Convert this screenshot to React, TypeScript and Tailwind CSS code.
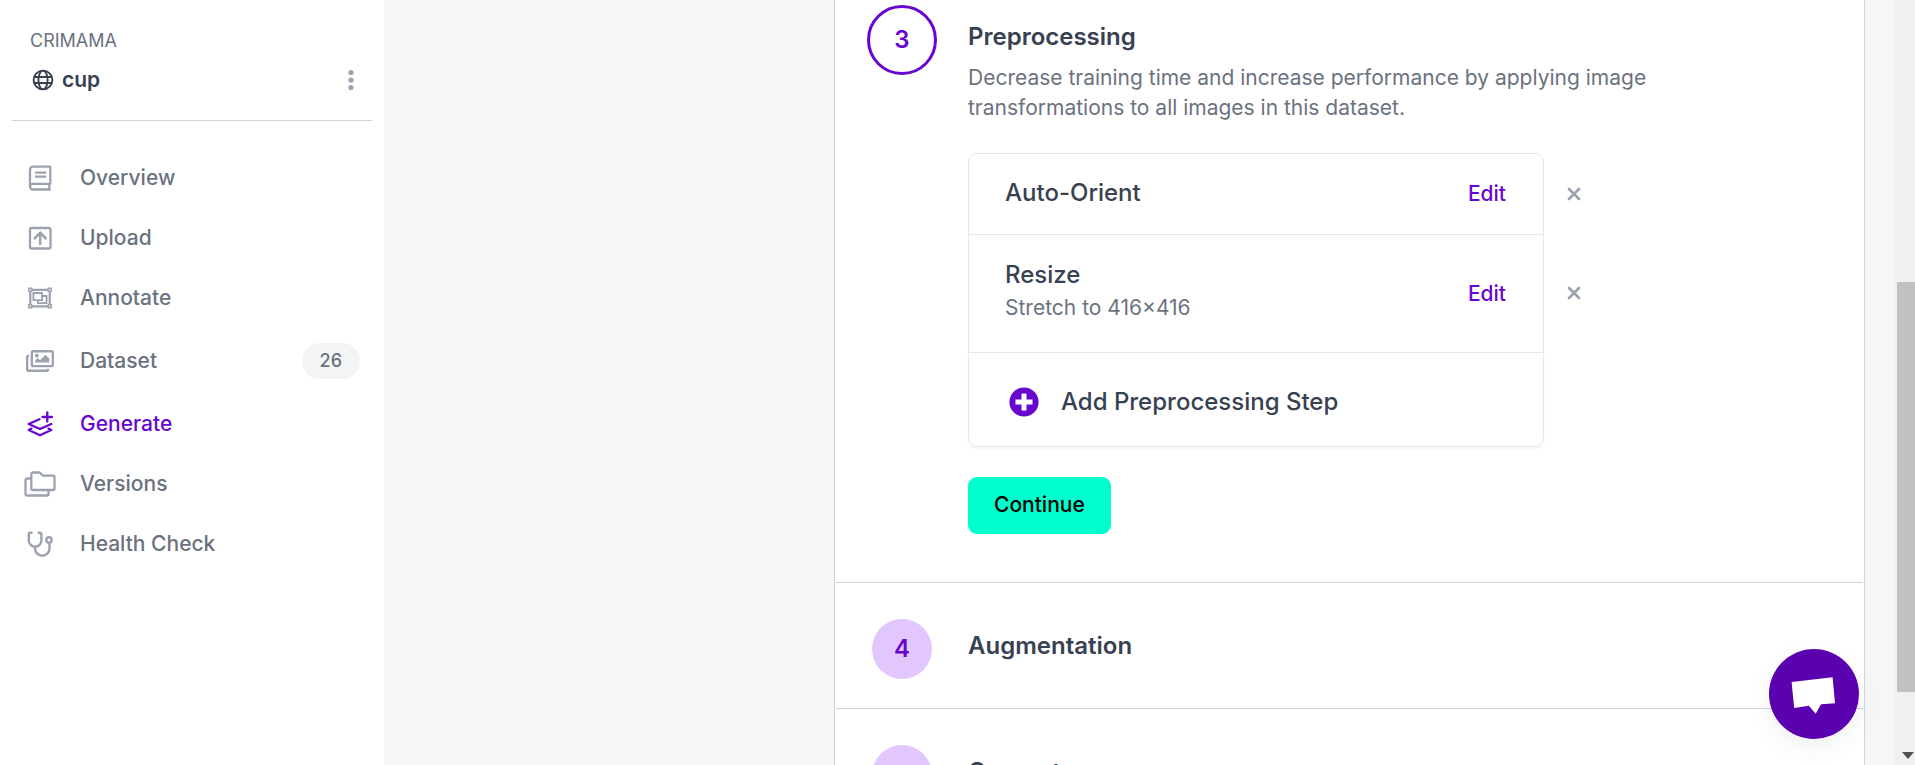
import type { ReactNode } from "react";
import { FaRegImages, FaRegObjectGroup } from "react-icons/fa";

type IconProps = { className?: string };

function GlobeIcon({ className }: IconProps) {
  return (
    <svg viewBox="0 0 22 22" fill="none" stroke="currentColor" strokeWidth="1.9" className={className} aria-hidden="true">
      <circle cx="11" cy="11" r="9.4" />
      <ellipse cx="11" cy="11" rx="4.6" ry="9.4" />
      <path d="M2.500 8h17M2.500 14h17" />
    </svg>
  );
}

function BookIcon({ className }: IconProps) {
  return (
    <svg viewBox="0 0 24 26" fill="none" stroke="currentColor" strokeWidth="2.3" className={className} aria-hidden="true">
      <path d="M22.3 1.7H5a3 3 0 0 0-3 3V21.5a3 3 0 0 0 3 3h17.7M22.3 1v18.500M21.300 19v5.500M22.500 18.800H4.800a3 3 0 0 0-2.800 2.700" />
      <path d="M7 7.700h11.200M7 11.700h11.200" />
    </svg>
  );
}

function UploadIcon({ className }: IconProps) {
  return (
    <svg viewBox="0 0 24 24" fill="none" stroke="currentColor" strokeWidth="2.3" className={className} aria-hidden="true">
      <rect x="2" y="2" width="20.500" height="20.500" rx="1.500" />
      <path d="M12.200 19V7M6 13l6.200-6.200L18.400 13" strokeWidth="2.500" />
    </svg>
  );
}

function GenerateIcon({ className }: IconProps) {
  return (
    <svg viewBox="0 0 26 26" fill="none" stroke="currentColor" strokeWidth="2.3" strokeLinecap="round" strokeLinejoin="round" className={className} aria-hidden="true">
      <path d="M20.300 1.500v9M15.500 6h9.400" />
      <path d="M12.500 8.200L1.700 13l11.300 5 11.300-5" />
      <path d="M4.500 17.600L1.700 19 13 24.200 24.300 19l-2.800-1.400" />
    </svg>
  );
}

function VersionsIcon({ className }: IconProps) {
  return (
    <svg viewBox="0 0 32 26" fill="none" stroke="currentColor" strokeWidth="2.3" strokeLinejoin="round" className={className} aria-hidden="true">
      <path d="M8.800 1.500h6.700l3.500 3.200h10a1.500 1.500 0 0 1 1.500 1.500v11.300a1.500 1.500 0 0 1-1.500 1.500H8.800a1.500 1.500 0 0 1-1.500-1.500V3a1.500 1.500 0 0 1 1.500-1.500z" />
      <path d="M7.300 7.500H3A1.500 1.500 0 0 0 1.500 9v14A1.500 1.500 0 0 0 3 24.500h20a1.500 1.500 0 0 0 1.500-1.500v-4" />
    </svg>
  );
}

function StethoscopeIcon({ className }: IconProps) {
  return (
    <svg viewBox="0 0 26 26" fill="none" stroke="currentColor" strokeWidth="2.4" strokeLinecap="round" className={className} aria-hidden="true">
      <path d="M4.500 1.800H3.300A1.500 1.500 0 0 0 1.800 3.300V9.500a6.300 6.300 0 0 0 12.600 0V3.300a1.500 1.500 0 0 0-1.500-1.500h-1.200" />
      <path d="M8.100 16v1.500a7.200 7.200 0 0 0 14.400 0V12" />
      <circle cx="22" cy="9" r="2.700" />
    </svg>
  );
}

function PlusCircleIcon({ className }: IconProps) {
  return (
    <svg viewBox="0 0 30 30" className={className} aria-hidden="true">
      <circle cx="15" cy="15" r="14.600" fill="currentColor" />
      <path d="M15 6.500v17M6.500 15h17" stroke="white" strokeWidth="5" />
    </svg>
  );
}

function CloseIcon({ className }: IconProps) {
  return (
    <svg viewBox="0 0 14 14" fill="none" stroke="currentColor" strokeWidth="2.800" strokeLinecap="round" className={className} aria-hidden="true">
      <path d="M2 2l10 10M12 2L2 12" />
    </svg>
  );
}

type NavItem = { label: string; icon: ReactNode; active?: boolean; count?: number };

const navItems: NavItem[] = [
  { label: "Overview", icon: <BookIcon className="h-[26px] w-6" /> },
  { label: "Upload", icon: <UploadIcon className="size-6" /> },
  { label: "Annotate", icon: <FaRegObjectGroup className="h-6 w-[26px]" /> },
  { label: "Dataset", icon: <FaRegImages className="size-7" />, count: 26 },
  { label: "Generate", icon: <GenerateIcon className="size-[26px]" />, active: true },
  { label: "Versions", icon: <VersionsIcon className="h-[26px] w-8" /> },
  { label: "Health Check", icon: <StethoscopeIcon className="size-[26px]" /> },
];

function Sidebar() {
  return (
    <aside className="w-96 shrink-0 bg-white px-3">
      <header className="border-b border-[#d1d5db] pt-[26px] pb-6 pl-[18px]">
        <p className="text-lg leading-[30px] text-[#6b7280]">CRIMAMA</p>
        <div className="mt-2 flex h-8 items-center">
          <GlobeIcon className="ml-0.5 size-[22px] text-[#374151]" />
          <h1 className="ml-2 flex-1 text-[21px] leading-8 font-semibold text-[#374151]">cup</h1>
          <button type="button" aria-label="Project options" className="mr-[17px] text-[#9ca3af]">
            <svg viewBox="0 0 8 22" fill="currentColor" className="h-[22px] w-2" aria-hidden="true">
              <circle cx="4" cy="3.500" r="2.600" />
              <circle cx="4" cy="11" r="2.600" />
              <circle cx="4" cy="18.500" r="2.600" />
            </svg>
          </button>
        </div>
      </header>
      <nav className="pt-[27px]">
        {navItems.map((item) => (
          <a
            key={item.label}
            href="#"
            className={
              item.active
                ? "flex items-center py-3 pr-3 pl-2 text-[21px] leading-9 font-medium text-[#6706ce]"
                : "flex items-center py-3 pr-3 pl-2 text-[21px] leading-9 font-medium text-[#6b7280]"
            }
          >
            <span className={item.active ? "flex w-10 justify-center" : "flex w-10 justify-center text-[#9ca3af]"}>
              {item.icon}
            </span>
            <span className="ml-5 flex-1">{item.label}</span>
            {item.count !== undefined && (
              <span className="my-[3px] rounded-full bg-[#f3f4f6] px-[18px] text-lg leading-9">{item.count}</span>
            )}
          </a>
        ))}
      </nav>
    </aside>
  );
}

function ConfigRow({ title, detail, className }: { title: string; detail?: string; className: string }) {
  return (
    <li className="flex items-center gap-[23px]">
      <div className={`flex w-[576px] items-center justify-between border-x border-t border-[#e5e7eb] pr-[37px] pl-9 ${className}`}>
        <div className={detail ? "pb-2" : "pb-0.5"}>
          <h3 className="text-2xl leading-9 font-medium text-[#374151]">{title}</h3>
          {detail && <p className="text-[21px] leading-[30px] text-[#6b7280]">{detail}</p>}
        </div>
        <button type="button" className="text-[21px] leading-[30px] font-medium text-[#6706ce]">
          Edit
        </button>
      </div>
      <button type="button" aria-label={`Remove ${title}`} className="text-[#9ca3af]">
        <CloseIcon className="size-[14px]" />
      </button>
    </li>
  );
}

function PendingStep({ number, title }: { number: number; title: string }) {
  return (
    <section className="mx-px flex border-t border-[#d1d5db] pt-9 pb-[29px] pl-9">
      <div className="flex size-[60px] shrink-0 items-center justify-center rounded-full bg-[#e2c7ff] text-2xl font-semibold text-[#6706ce]">
        {number}
      </div>
      <h2 className="ml-9 pt-[9px] text-2xl leading-9 font-semibold text-[#374151]">{title}</h2>
    </section>
  );
}

export default function App() {
  return (
    <div className="flex h-screen overflow-hidden bg-[#f4f6f8] font-['Inter',sans-serif]">
      <Sidebar />
      <main className="min-w-0 flex-1 pr-[30px] pl-[450px]">
        <div className="h-full overflow-hidden border-x border-[#d1d5db] bg-white">
          <section className="flex pt-[5px] pb-12 pl-8">
            <div className="flex size-[70px] shrink-0 items-center justify-center rounded-full border-3 border-[#6706ce] text-2xl font-semibold text-[#6706ce]">
              3
            </div>
            <div className="ml-[31px] pt-[14px]">
              <h2 className="text-2xl leading-9 font-semibold text-[#374151]">Preprocessing</h2>
              <p className="mt-2 max-w-[720px] text-[21px] leading-[30px] text-[#6b7280]">
                Decrease training time and increase performance by applying image transformations to all images in this
                dataset.
              </p>
              <ul className="mt-[30px]">
                <ConfigRow title="Auto-Orient" className="h-[81px] rounded-t-[9px]" />
                <ConfigRow title="Resize" detail="Stretch to 416×416" className="h-[118px]" />
                <li>
                  <button
                    type="button"
                    className="flex h-[95px] w-[576px] items-center gap-[22px] rounded-b-[9px] border border-[#e5e7eb] px-10 pt-1 text-2xl font-medium text-[#374151] shadow-[0_2px_3px_rgba(0,0,0,0.04)]"
                  >
                    <PlusCircleIcon className="size-[30px] text-[#6706ce]" />
                    Add Preprocessing Step
                  </button>
                </li>
              </ul>
              <button
                type="button"
                className="mt-[30px] rounded-[9px] bg-[#00ffce] px-[26px] pt-[13px] pb-[14px] text-[21px] leading-[30px] font-medium text-black"
              >
                Continue
              </button>
            </div>
          </section>
          <PendingStep number={4} title="Augmentation" />
          <PendingStep number={5} title="Generate" />
        </div>
      </main>
      <div className="flex w-5 shrink-0 flex-col items-center bg-[#f0f0f0] pb-[6px]" aria-hidden="true">
        <div className="mt-[282px] h-[410px] w-[18px] self-end bg-[#c1c1c1]" />
        <svg viewBox="0 0 12 7" className="mt-auto ml-[5px] h-[7px] w-3 fill-[#505050]">
          <path d="M0 0h12L6 7z" />
        </svg>
      </div>
      <button
        type="button"
        aria-label="Open chat"
        className="fixed right-14 bottom-[26px] flex size-[90px] items-center justify-center rounded-full bg-[#5b02b0] shadow-[0_8px_24px_rgba(0,0,0,0.06)]"
      >
        <svg viewBox="0 0 90 90" fill="white" className="size-[90px]" aria-hidden="true">
          <path d="M22.600 33L63.600 28.300 66 54.200 52 55.300 46.700 64.800 39.800 56.800 25.200 58.900z" />
        </svg>
      </button>
    </div>
  );
}
